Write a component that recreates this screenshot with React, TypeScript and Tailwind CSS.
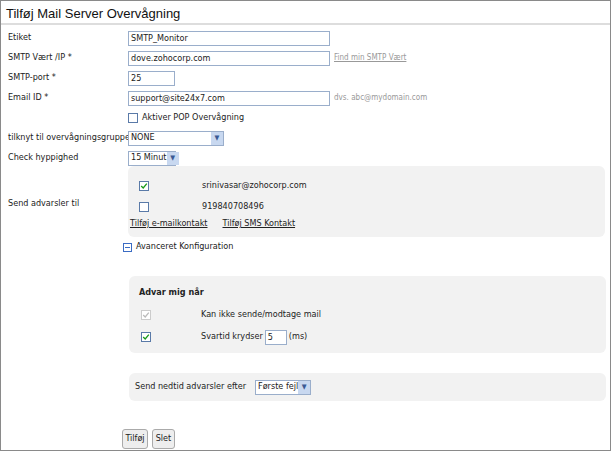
const font = { fontFamily: '"DejaVu Sans Condensed", "DejaVu Sans", Verdana, sans-serif' };

function Row({ label, children, h = "h-[20px]" }: { label?: string; children?: React.ReactNode; h?: string }) {
  return (
    <div className={`flex items-center whitespace-nowrap ${h}`}>
      <div className="w-[120px] shrink-0 text-[9px] text-[#222]">{label}</div>
      <div className="flex items-center gap-1">{children}</div>
    </div>
  );
}

function Select({ value, w }: { value: string; w: string }) {
  return (
    <div className={`flex h-[15px] items-center justify-between whitespace-nowrap border border-[#9aaecb] bg-white pl-[2px] text-[9px] ${w}`}>
      <span>{value}</span>
      <span className="flex h-[13px] w-[12px] shrink-0 items-center justify-center bg-[#c8d8f0] text-[7px] text-[#3b5a94]">▼</span>
    </div>
  );
}

function Check({ on, dim }: { on?: boolean; dim?: boolean }) {
  return (
    <span className={`flex h-[10px] w-[10px] items-center justify-center border ${dim ? "border-[#ccc]" : "border-[#5a7aa8]"} bg-white`}>
      {on && (
        <svg viewBox="0 0 10 10" className="h-[8px] w-[8px]">
          <path d="M1.5 5 L4 7.5 L8.5 2" fill="none" stroke={dim ? "#bbb" : "#1a9a1a"} strokeWidth="1.6" />
        </svg>
      )}
    </span>
  );
}

export default function App() {
  return (
    <div className="h-[451px] w-[611px] overflow-hidden border border-[#8a8a8a] bg-white text-[#222]" style={font}>
      <div className="h-[24px] border-b-2 border-[#ddd] pl-[5px] pt-[3px] text-[13px] text-[#111]" style={{ fontFamily: '"Liberation Sans", Arial, sans-serif' }}>
        Tilføj Mail Server Overvågning
      </div>
      <div className="pl-[7px] pt-[3px]">
        <Row label="Etiket">
          <div className="h-[15px] w-[202px] border border-[#9aaecb] pl-[2px] text-[9px] leading-[13px]">SMTP_Monitor</div>
        </Row>
        <Row label="SMTP Vært /IP  *">
          <div className="h-[15px] w-[202px] border border-[#9aaecb] pl-[2px] text-[9px] leading-[13px]">dove.zohocorp.com</div>
          <span className="text-[8px] text-[#999] underline">Find min SMTP Vært</span>
        </Row>
        <Row label="SMTP-port *">
          <div className="h-[15px] w-[47px] border border-[#9aaecb] pl-[2px] text-[9px] leading-[13px]">25</div>
        </Row>
        <Row label="Email ID *">
          <div className="h-[15px] w-[202px] border border-[#9aaecb] pl-[2px] text-[9px] leading-[13px]">support@site24x7.com</div>
          <span className="text-[8px] text-[#999]">dvs. abc@mydomain.com</span>
        </Row>
        <Row>
          <Check />
          <span className="text-[9px]">Aktiver POP Overvågning</span>
        </Row>
        <Row label="tilknyt til overvågningsgruppe">
          <Select value="NONE" w="w-[96px]" />
        </Row>
        <Row label="Check hyppighed">
          <Select value="15 Minut" w="w-[48px]" />
        </Row>
        <div className="mt-[-2px] flex items-center">
          <div className="w-[120px] shrink-0 pt-[4px] text-[9px]">Send advarsler til</div>
          <div className="h-[71px] w-[477px] rounded-[6px] bg-[#f2f2f2] pl-[11px] pt-[9px] text-[9px]">
            <div className="flex h-[21px] items-center">
              <div className="w-[63px]"><Check on /></div>srinivasar@zohocorp.com
            </div>
            <div className="flex h-[21px] items-center">
              <div className="w-[63px]"><Check /></div>919840708496
            </div>
            <div className="-ml-[9px] flex h-[14px] items-center gap-[15px] underline">
              <span>Tilføj e-mailkontakt</span><span>Tilføj SMS Kontakt</span>
            </div>
          </div>
        </div>
        <div className="ml-[115px] mt-[3px] flex h-[14px] items-center gap-[4px] text-[9px]">
          <span className="flex h-[9px] w-[9px] items-center justify-center border border-[#3b6cc4]">
            <span className="h-[1px] w-[5px] bg-[#3b6cc4]" />
          </span>
          Avanceret Konfiguration
        </div>
        <div className="ml-[121px] mt-[22px] h-[77px] w-[477px] rounded-[6px] bg-[#f2f2f2] pl-[10px] pt-[10px] text-[9px]">
          <div className="mb-[5px] font-bold">Advar mig når</div>
          <div className="flex h-[20px] items-center pl-[2px]">
            <div className="w-[60px]"><Check on dim /></div>Kan ikke sende/modtage mail
          </div>
          <div className="flex h-[25px] items-center pl-[2px]">
            <div className="w-[60px]"><Check on /></div>
            Svartid krydser
            <span className="mx-[2px] h-[15px] w-[22px] border border-[#9aaecb] bg-white pl-[2px] leading-[13px]">5</span>
            (ms)
          </div>
        </div>
        <div className="ml-[121px] mt-[20px] flex h-[28px] w-[477px] items-center whitespace-nowrap rounded-[6px] bg-[#f2f2f2] pl-[6px] text-[9px]">
          <span className="w-[120px]">Send nedtid advarsler efter</span>
          <Select value="Første fejl" w="w-[56px]" />
        </div>
        <div className="ml-[114px] mt-[28px] flex gap-[4px] text-[9px]">
          <button className="h-[20px] w-[26px] rounded-[3px] border border-[#aaa] bg-[#eee]">Tilføj</button>
          <button className="h-[20px] w-[23px] rounded-[3px] border border-[#aaa] bg-[#eee]">Slet</button>
        </div>
      </div>
    </div>
  );
}
